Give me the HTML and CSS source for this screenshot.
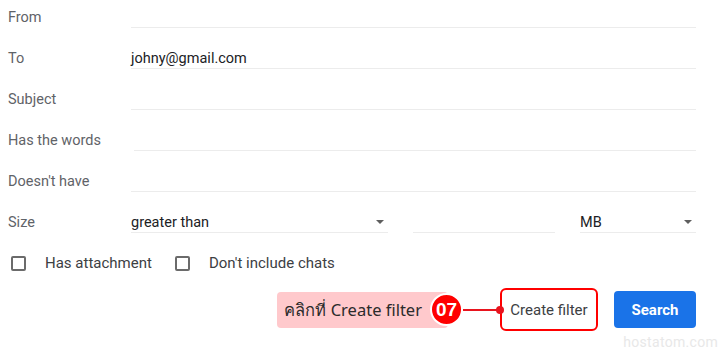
FILE: index.html
```html
<!DOCTYPE html>
<html lang="en">
<head>
  <meta charset="UTF-8">
  <title>Search filter</title>
  <link rel="stylesheet" href="styles.css">
</head>
<body>
<div id="panel">

  <div class="row">
    <div class="label">From</div>
    <div class="field"></div>
  </div>
  <div class="row">
    <div class="label">To</div>
    <div class="field">johny@gmail.com</div>
  </div>
  <div class="row">
    <div class="label">Subject</div>
    <div class="field"></div>
  </div>
  <div class="row">
    <div class="label">Has the words</div>
    <div class="field shifted"></div>
  </div>
  <div class="row">
    <div class="label">Doesn't have</div>
    <div class="field"></div>
  </div>
  <div class="row">
    <div class="label">Size</div>
    <div class="size">
      <div class="field select wide">greater than<span class="caret"></span></div>
      <div class="field num"></div>
      <div class="field select unit">MB<span class="caret"></span></div>
    </div>
  </div>

  <div class="checks">
    <label class="check"><span class="box"></span>Has attachment</label>
    <label class="check"><span class="box"></span>Don't include chats</label>
  </div>

  <div class="actions">
    <div class="note">
      <span class="note-text">คลิกที่ Create filter</span>
      <span class="step">07</span>
      <span class="wire"></span>
    </div>
    <button class="btn outline">Create filter</button>
    <button class="btn primary">Search</button>
  </div>

  <div id="mark">hostatom.com</div>
</div>
</body>
</html>
```

FILE: styles.css
```css
body {
  margin: 0;
  background: #fff;
  font-family: Roboto, "Noto Sans", Arial, sans-serif;
}

#panel {
  position: relative;
  width: 720px;
  height: 351px;
  padding: 0 24px 0 8px;
  box-sizing: border-box;
  overflow: hidden;
}

.row {
  display: grid;
  grid-template-columns: 123px 1fr;
  height: 28px;
  margin-bottom: 13px;
}

.label {
  display: flex;
  align-items: flex-end;
  height: 27px;
  line-height: 18px;
  font-size: 14.5px;
  color: #5f6368;
}

.field {
  display: flex;
  align-items: flex-end;
  height: 27px;
  line-height: 18px;
  font-size: 14.5px;
  color: #202124;
  border-bottom: 1px solid #ececec;
}

.field.shifted {
  margin-left: 3px;
}

.size {
  display: flex;
}

.select {
  position: relative;
}

.wide {
  width: 257px;
}

.num {
  width: 142px;
  margin-left: 25px;
}

.unit {
  width: 116px;
  margin-left: 25px;
}

.caret {
  position: absolute;
  right: 4px;
  bottom: 8px;
  border-left: 4px solid transparent;
  border-right: 4px solid transparent;
  border-top: 4px solid #5f5f5f;
}

.checks {
  display: flex;
  gap: 23px;
  margin-top: 20px;
  padding-left: 3px;
  height: 20px;
}

.check {
  display: flex;
  align-items: center;
  font-size: 15px;
  color: #3c4043;
}

.box {
  width: 11px;
  height: 11px;
  border: 2px solid #6b6b6b;
  border-radius: 2px;
  margin-right: 19px;
}

.actions {
  display: flex;
  justify-content: flex-end;
  align-items: center;
  margin-top: 15px;
}

.note {
  display: flex;
  align-items: center;
}

.note-text {
  height: 36px;
  line-height: 36px;
  padding: 0 26px 0 7px;
  margin-right: -18px;
  background: #ffc9cc;
  border-radius: 4px;
  font-size: 16.5px;
  color: #2b2b2b;
  font-family: "Noto Sans", "DejaVu Sans", sans-serif;
}

.step {
  position: relative;
  width: 29px;
  height: 29px;
  line-height: 29px;
  text-align: center;
  border: 2px solid #fff;
  border-radius: 50%;
  background: #f00;
  color: #fff;
  font-weight: bold;
  font-size: 19px;
  font-family: Arial, "Liberation Sans", sans-serif;
}

.wire {
  position: relative;
  width: 37px;
  height: 2px;
  background: #e8141e;
}

.wire:after {
  content: '';
  position: absolute;
  right: -4px;
  top: -3px;
  width: 8px;
  height: 8px;
  border-radius: 50%;
  background: #e8141e;
}

.btn {
  font-family: Roboto, "Noto Sans", sans-serif;
  font-size: 15px;
  border-radius: 4px;
  cursor: pointer;
}

.outline {
  width: 98px;
  height: 43px;
  border: 2px solid #f00;
  border-radius: 6px;
  background: #fff;
  color: #3c4043;
  padding: 0;
}

.primary {
  width: 82px;
  height: 37px;
  margin-left: 16px;
  border: 0;
  background: #1a73e8;
  color: #fff;
  font-weight: bold;
}

#mark {
  position: absolute;
  right: 2px;
  bottom: 1px;
  font-size: 14px;
  letter-spacing: 0.3px;
  color: #e8e8e8;
  font-family: Roboto, sans-serif;
}
```
